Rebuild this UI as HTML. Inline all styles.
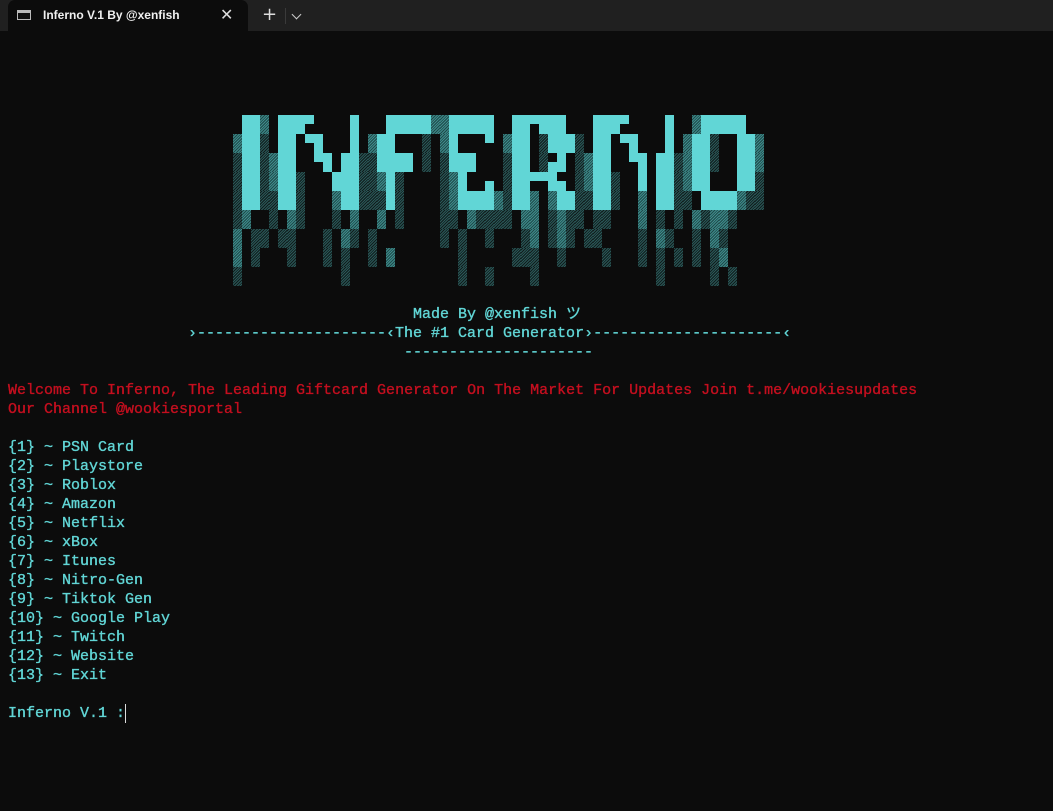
<!DOCTYPE html>
<html><head><meta charset="utf-8">
<style>
html,body{margin:0;padding:0;background:#0c0c0c;width:1053px;height:811px;overflow:hidden;}
#bar{position:absolute;left:0;top:0;width:1053px;height:31px;background:#202020;}
#tab{position:absolute;left:8px;top:0;width:240px;height:31px;background:#0c0c0c;border-radius:7px 7px 0 0;}
#tab .t{position:absolute;left:35px;top:8px;font:bold 12px "Liberation Sans",sans-serif;color:#f0f0f0;}
#tab .ic{position:absolute;left:9px;top:10px;width:14px;height:10px;border:1px solid #bbb;box-sizing:border-box;background:#111;}
#tab .ic:before{content:"";position:absolute;left:0;top:0;right:0;height:2px;background:#bbb;}
#tab .x{position:absolute;left:212px;top:5px;font:16px "DejaVu Sans",sans-serif;color:#ddd;}
.plus{position:absolute;left:262px;top:4px;font:18px "DejaVu Sans",sans-serif;color:#ddd;}
.chev{position:absolute;left:293px;top:11px;width:6px;height:6px;border-right:1.5px solid #ccc;border-bottom:1.5px solid #ccc;transform:rotate(45deg);}
.sep{position:absolute;left:285px;top:8px;width:1px;height:16px;background:#3a3a3a;}
.l{position:absolute;font:15px/19px "Liberation Mono","DejaVu Sans Mono","Noto Sans CJK JP",monospace;white-space:pre;color:#61d6d6;-webkit-text-stroke:0.35px currentColor;}
.r{color:#c50f1f;}
#logo div{position:absolute;width:9px;height:19px;}
.F{background:#61d6d6;}
.T{background:linear-gradient(#61d6d6 0 9px,transparent 9px);}
.B{background:linear-gradient(transparent 0 9px,#61d6d6 9px);}
.H{background:repeating-linear-gradient(135deg,#3f8b8b 0 1px,#1e4a4a 1px 2px);}
.h{background:repeating-linear-gradient(135deg,#2a5858 0 1px,#101c1c 1px 2px);}
#cur{position:absolute;left:125px;top:704px;width:1px;height:19px;background:#ddd;}
</style></head><body>
<div id="bar"><div id="tab"><div class="ic"></div><div class="t">Inferno V.1 By @xenfish</div><div class="x">✕</div></div>
<div class="plus">+</div><div class="sep"></div><div class="chev"></div></div>
<div id="logo"></div>
<div class="l" style="left:413px;top:305px">Made By @xenfish ツ</div>
<div class="l" style="left:188px;top:324px">›---------------------‹The #1 Card Generator›---------------------‹</div>
<div class="l" style="left:404px;top:343px">---------------------</div>
<div class="l r" style="left:8px;top:381px">Welcome To Inferno, The Leading Giftcard Generator On The Market For Updates Join t.me/wookiesupdates
Our Channel @wookiesportal</div>
<div class="l" style="left:8px;top:438px">{1} ~ PSN Card
{2} ~ Playstore
{3} ~ Roblox
{4} ~ Amazon
{5} ~ Netflix
{6} ~ xBox
{7} ~ Itunes
{8} ~ Nitro-Gen
{9} ~ Tiktok Gen
{10} ~ Google Play
{11} ~ Twitch
{12} ~ Website
{13} ~ Exit

Inferno V.1 :</div>
<div id="cur"></div>
<script>
var rows=[
"1-2F,3H,5-7F,8T,13F,17-21F,22-23H,24-28F,31-32F,33T,34-36F,40-42F,43T,48F,51H,52-56F",
"0H,1-2F,3h,5-6F,8T,9F,13F,15H,16-17F,21h,23H,24F,28T,30H,31-32F,34h,35-36F,37F,38h,40-41F,43T,44F,48F,50H,51-52F,53h,56-57F,58H",
"0h,1-2F,3h,4H,5-6F,9T,10F,12-13F,14-15h,16-19F,21h,23h,24-26F,30h,31-32F,34h,35B,36F,38h,39H,40-41F,44T,45F,47-48F,49h,50H,51-52F,53h,56-57F,58H",
"0h,1-2F,3h,4H,5-6F,7h,11F,12-13F,14-15h,16H,17F,18h,23h,24H,25F,28B,30h,31-32F,33-34T,35F,36B,38h,39H,40-41F,42h,45F,47-48F,49h,50H,51-52F,56-57F,58h",
"0h,1-2F,3-4h,5-6F,7h,11H,12-13F,14-16h,17F,18h,23h,24H,25-28F,29H,30h,31-32F,33H,35H,36-37F,38-39h,40-41F,42h,45H,47-48F,49-50h,52-55F,56H,57-58h",
"0h,1H,4h,6H,7h,11h,13H,16H,18h,23-24h,26H,27h,28-30h,32-33H,35h,36H,37-38h,40-41h,45H,47h,49h,51H,52h,53-54H,55h",
"0H,2-3h,5-6h,10h,12H,13h,15h,23h,25h,28h,32h,33H,35h,36H,37h,39-40h,45h,47H,48h,51h,53H,54h",
"0H,2h,6h,10h,12h,15h,17H,25h,31h,32-33h,36h,41h,45h,47h,49h,51h,53h,54H",
"0h,12h,25h,28h,33h,47h,53h,55h"];
var L=document.getElementById('logo'),s='';
rows.forEach(function(r,y){r.split(',').forEach(function(p){var m=p.match(/^(\d+)(?:-(\d+))?(\w)$/);var a=+m[1],b=m[2]?+m[2]:a;for(var c=a;c<=b;c++)s+='<div class="'+m[3]+'" style="left:'+(233+9*c)+'px;top:'+(115+19*y)+'px"></div>';});});
L.innerHTML=s;
</script>
</body></html>
